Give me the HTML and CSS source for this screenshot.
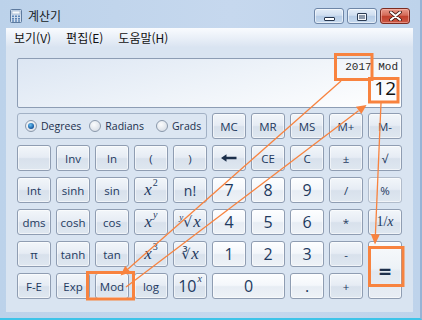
FILE: index.html
```html
<!DOCTYPE html>
<html lang="ko">
<head>
<meta charset="utf-8">
<title>계산기</title>
<link rel="stylesheet" href="styles.css">
</head>
<body>
<div class="window">
  <div class="titlebar">
    <svg class="app-icon" width="12" height="14" viewBox="0 0 12 14">
      <rect x="0.5" y="0.5" width="11" height="13" rx="1" fill="#d3dfee" stroke="#5d7a9e"/>
      <rect x="2" y="2" width="8" height="3" fill="#f7fafd" stroke="#86a1c2" stroke-width="0.6"/>
      <rect x="2" y="6.5" width="2" height="1.6" fill="#5b84b6"/>
      <rect x="5" y="6.5" width="2" height="1.6" fill="#5b84b6"/>
      <rect x="8" y="6.5" width="2" height="1.6" fill="#5b84b6"/>
      <rect x="2" y="9" width="2" height="1.6" fill="#5b84b6"/>
      <rect x="5" y="9" width="2" height="1.6" fill="#5b84b6"/>
      <rect x="8" y="9" width="2" height="1.6" fill="#5b84b6"/>
      <rect x="2" y="11.3" width="2" height="1.4" fill="#5b84b6"/>
      <rect x="5" y="11.3" width="2" height="1.4" fill="#5b84b6"/>
      <rect x="8" y="11.3" width="2" height="1.4" fill="#5b84b6"/>
    </svg>
    <span class="title">계산기</span>
    <div class="controls">
      <div class="ctl"><span class="glyph-min"></span></div>
      <div class="ctl"><span class="glyph-max"></span></div>
      <div class="ctl close">
        <svg width="13" height="10" viewBox="0 0 13 10">
          <path d="M2 1.2 L11 8.8 M11 1.2 L2 8.8" stroke="#3a1712" stroke-width="3.6" stroke-linecap="round"/>
          <path d="M2 1.2 L11 8.8 M11 1.2 L2 8.8" stroke="#ffffff" stroke-width="2" stroke-linecap="round"/>
        </svg>
      </div>
    </div>
  </div>
  <div class="frame">
    <div class="client">
      <div class="menubar">
        <span class="menu-item">보기(V)</span>
        <span class="menu-item">편집(E)</span>
        <span class="menu-item">도움말(H)</span>
      </div>
      <div class="content">
        <div class="display">
          <div class="expr">2017 Mod</div>
          <div class="value">12</div>
        </div>
        <div class="keys">
          <div class="radio-group">
            <span class="radio-item r1"><span class="radio on"></span>Degrees</span>
            <span class="radio-item r2"><span class="radio"></span>Radians</span>
            <span class="radio-item"><span class="radio"></span>Grads</span>
          </div>
          <div class="key">MC</div>
          <div class="key">MR</div>
          <div class="key">MS</div>
          <div class="key">M+</div>
          <div class="key">M-</div>

          <div class="key"></div>
          <div class="key">Inv</div>
          <div class="key">ln</div>
          <div class="key">(</div>
          <div class="key">)</div>
          <div class="key">
            <svg width="16" height="8" viewBox="0 0 16 8"><path d="M0 4 L5.5 0.3 L5.5 2.7 L15.5 2.7 L15.5 5.3 L5.5 5.3 L5.5 7.7 Z" fill="#1c2f4b"/></svg>
          </div>
          <div class="key">CE</div>
          <div class="key">C</div>
          <div class="key">±</div>
          <div class="key">√</div>

          <div class="key">Int</div>
          <div class="key">sinh</div>
          <div class="key">sin</div>
          <div class="key math"><i>x</i><span class="sup up">2</span></div>
          <div class="key big">n!</div>
          <div class="key num">7</div>
          <div class="key num">8</div>
          <div class="key num">9</div>
          <div class="key">/</div>
          <div class="key dim">%</div>

          <div class="key">dms</div>
          <div class="key">cosh</div>
          <div class="key">cos</div>
          <div class="key math"><i>x</i><span class="sup">y</span></div>
          <div class="key math"><span class="rsup">y</span><span class="rootsign">√</span><i>x</i></div>
          <div class="key num">4</div>
          <div class="key num">5</div>
          <div class="key num">6</div>
          <div class="key">*</div>
          <div class="key math small">1/<i>x</i></div>

          <div class="key">π</div>
          <div class="key">tanh</div>
          <div class="key">tan</div>
          <div class="key math"><i>x</i><span class="sup up">3</span></div>
          <div class="key math"><span class="cbrt">∛</span><i>x</i></div>
          <div class="key num">1</div>
          <div class="key num">2</div>
          <div class="key num">3</div>
          <div class="key">-</div>
          <div class="key eq">=</div>

          <div class="key">F-E</div>
          <div class="key">Exp</div>
          <div class="key">Mod</div>
          <div class="key">log</div>
          <div class="key math ten">10<span class="sup">x</span></div>
          <div class="key num zero">0</div>
          <div class="key num">.</div>
          <div class="key">+</div>
        </div>
      </div>
    </div>
  </div>
  <svg class="annot" width="422" height="320" viewBox="0 0 422 320">
    <g fill="none" stroke="#f8833f" stroke-width="3">
      <rect x="335.5" y="54.5" width="36.5" height="25"/>
      <rect x="369.5" y="78.5" width="28.5" height="23.5"/>
      <rect x="87.5" y="272.5" width="46" height="26.5"/>
      <rect x="369.5" y="247.5" width="33.5" height="38"/>
    </g>
    <g stroke="#f8833f" stroke-width="1.3" fill="none">
      <line x1="341" y1="81" x2="128" y2="269"/>
      <line x1="126" y1="287" x2="358.5" y2="110.7"/>
      <line x1="381" y1="103" x2="375.4" y2="235"/>
    </g>
    <g fill="#f8833f">
      <polygon points="120.5,275.5 130.8,272.6 125.2,265.8"/>
      <polygon points="366.5,105 361.4,114.1 355.9,106.8"/>
      <polygon points="375,244.5 379.8,234.4 370.8,234"/>
    </g>
  </svg>
</div>
</body>
</html>
```
FILE: styles.css
```css
* {
  box-sizing: border-box;
  margin: 0;
  padding: 0;
}

html, body {
  width: 422px;
  height: 320px;
  overflow: hidden;
}

body {
  font-family: "Open Sans", "Noto Sans", sans-serif;
  background: #3cc3e8;
}

.window {
  position: relative;
  width: 422px;
  height: 320px;
  display: flex;
  flex-direction: column;
  background: linear-gradient(to right, #bcd2ea, #c6d8ee 55%, #bed3eb);
  border-right: 2px solid #97b3d5;
  border-bottom: 2px solid #3ec4e9;
}

/* title bar */
.titlebar {
  height: 28px;
  display: flex;
  align-items: flex-start;
  padding-top: 9px;
  padding-left: 10px;
}

.app-icon {
  display: block;
  flex: none;
}

.title {
  margin-left: 6px;
  font-family: "Noto Sans CJK KR", sans-serif;
  font-size: 12px;
  line-height: 14px;
  color: #151b24;
}

.controls {
  margin-left: auto;
  margin-right: 10px;
  margin-top: -1px;
  display: flex;
  gap: 3px;
}

.ctl {
  width: 30px;
  height: 16px;
  border: 1px solid #6e86a7;
  border-radius: 3px;
  background: linear-gradient(#e3edf8, #cfdef0 45%, #b7cde7 52%, #c6d9ee);
  box-shadow: inset 0 0 0 1px rgba(255, 255, 255, 0.55);
  display: flex;
  align-items: center;
  justify-content: center;
}

.ctl.close {
  border-color: #7b2c22;
  background: linear-gradient(#e89a8c, #d46a58 45%, #c1402d 52%, #cc5845);
  box-shadow: inset 0 0 0 1px rgba(255, 200, 190, 0.5);
}

.glyph-min {
  width: 11px;
  height: 4px;
  margin-top: 5px;
  border: 1px solid #27364e;
  background: #ffffff;
  border-radius: 1px;
}

.glyph-max {
  width: 10px;
  height: 8px;
  margin-top: 1px;
  border: 1px solid #2a3a52;
  background: #8c99ab;
  box-shadow: inset 0 0 0 1px #f3f6fa;
  border-radius: 1px;
}

/* frame + client */
.frame {
  flex: 1;
  display: flex;
  padding: 0 7px 6px 6px;
}

.client {
  flex: 1;
  display: flex;
  flex-direction: column;
  background: #d9e4f1;
}

.menubar {
  height: 19px;
  display: flex;
  align-items: center;
  gap: 15px;
  padding-left: 8px;
  background: linear-gradient(#f9fbfe, #eaf0f8 50%, #dae4f1);
  font-family: "Noto Sans CJK KR", sans-serif;
  font-size: 12px;
  color: #111;
}

.content {
  padding: 11px 11px 0 11px;
}

/* display */
.display {
  height: 50px;
  border: 1px solid #8d9db4;
  border-radius: 2px;
  background: linear-gradient(165deg, #dce6f3 0%, #eef3f9 50%, #ffffff 100%);
  display: flex;
  flex-direction: column;
  align-items: flex-end;
  padding: 2px 3px 0 0;
  margin-bottom: 5px;
}

.expr {
  font-family: "Liberation Mono", "DejaVu Sans Mono", monospace;
  font-size: 11px;
  line-height: 13px;
  color: #2a2a2a;
}

.value {
  margin-top: 3px;
  margin-right: 2px;
  font-family: "Open Sans", sans-serif;
  font-size: 19px;
  line-height: 22px;
  color: #111;
}

/* keys */
.keys {
  display: grid;
  grid-template-columns: repeat(10, 34px);
  grid-auto-rows: 26px;
  column-gap: 5px;
  row-gap: 6px;
}

.radio-group {
  grid-column: span 5;
  border: 1px solid #a2b1c5;
  border-radius: 3px;
  background: #dce6f2;
  display: flex;
  align-items: center;
  padding-left: 7px;
  font-size: 10.5px;
  color: #1b2f4d;
}

.radio-item {
  display: flex;
  align-items: center;
}

.radio-item.r1 {
  margin-right: 8px;
}

.radio-item.r2 {
  margin-right: 12px;
}

.radio {
  width: 12px;
  height: 12px;
  border-radius: 50%;
  border: 1px solid #8a98ab;
  background: radial-gradient(circle at 40% 35%, #fbfcfd, #d0d7e1);
  margin-right: 4px;
  display: flex;
  align-items: center;
  justify-content: center;
}

.radio.on::after {
  content: "";
  width: 6px;
  height: 6px;
  border-radius: 50%;
  background: radial-gradient(circle at 40% 35%, #68c1f5, #0c4d97 75%);
}

.key {
  border: 1px solid #8f9db2;
  border-radius: 3px;
  background: linear-gradient(#f2f6fa, #e6ecf4 47%, #d8e1ec 53%, #dfe7f0);
  box-shadow: inset 0 0 0 1px rgba(255, 255, 255, 0.55);
  display: flex;
  align-items: center;
  justify-content: center;
  font-size: 11.5px;
  color: #1e3a5f;
  white-space: nowrap;
}

.key.dim {
  border-color: #b1bccb;
}

.key.big {
  font-size: 14px;
}

.key.num {
  font-size: 16px;
  background: linear-gradient(#fdfeff, #f4f7fb 47%, #e7edf4 53%, #eef2f7);
}

.key.zero {
  grid-column: span 2;
}

.key.eq {
  grid-row: span 2;
  font-size: 22px;
  font-weight: 700;
  color: #1c2f4b;
  background: linear-gradient(#f8fafc, #edf2f7 47%, #e1e8f0 53%, #e8edf4);
}

.key.math {
  font-family: "Liberation Serif", "DejaVu Serif", serif;
  font-size: 17px;
  color: #1e3a5f;
}

.key.math i {
  font-style: italic;
}

.key.math.small {
  font-size: 14px;
}

.key.math.ten {
  font-family: "Open Sans", sans-serif;
  font-size: 16px;
}

.sup {
  font-family: "Liberation Serif", serif;
  font-style: italic;
  font-size: 10px;
  line-height: 0;
  position: relative;
  top: -7px;
  margin-left: 1px;
}

.sup.up {
  font-style: normal;
}

.rsup {
  font-family: "Liberation Serif", serif;
  font-style: italic;
  font-size: 9px;
  line-height: 0;
  position: relative;
  top: -5px;
}

.rootsign {
  font-family: "DejaVu Sans", sans-serif;
  font-size: 14px;
  margin-right: 1px;
}

.cbrt {
  font-family: "DejaVu Sans", sans-serif;
  font-size: 14px;
  margin-right: 1px;
}

/* annotation overlay */
.annot {
  position: absolute;
  left: 0;
  top: 0;
  pointer-events: none;
}
```
